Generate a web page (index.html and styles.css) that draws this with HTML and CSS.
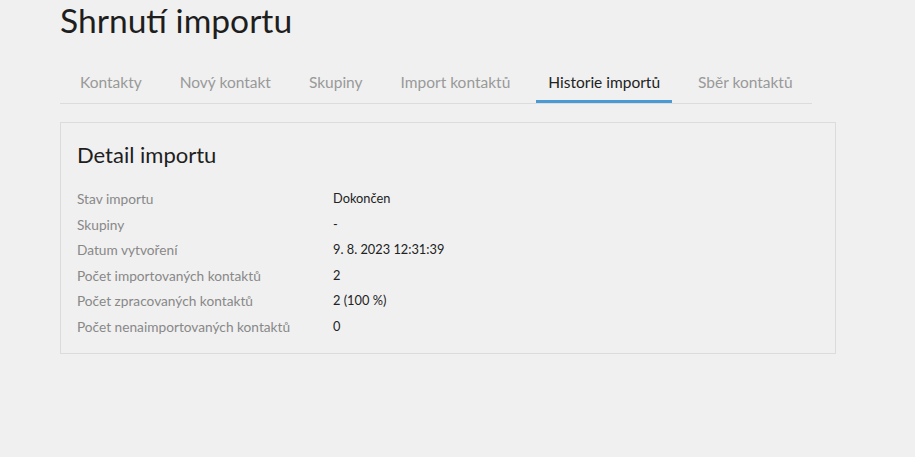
FILE: index.html
```html
<!DOCTYPE html>
<html lang="cs">
<head>
  <meta charset="UTF-8">
  <meta name="viewport" content="width=device-width, initial-scale=1.0">
  <title>Shrnutí importu</title>
  <link rel="stylesheet" href="styles.css">
</head>
<body>
  <div class="page">
    <h1 class="page-title">Shrnutí importu</h1>

    <!-- Tabs -->
    <ul class="tabs">
      <li class="tab">Kontakty</li>
      <li class="tab">Nový kontakt</li>
      <li class="tab">Skupiny</li>
      <li class="tab">Import kontaktů</li>
      <li class="tab active">Historie importů</li>
      <li class="tab">Sběr kontaktů</li>
    </ul>

    <!-- Detail -->
    <div class="card">
      <h2 class="card-title">Detail importu</h2>
      <dl class="details">
        <dt>Stav importu</dt>
        <dd>Dokončen</dd>
        <dt>Skupiny</dt>
        <dd>-</dd>
        <dt>Datum vytvoření</dt>
        <dd>9. 8. 2023 12:31:39</dd>
        <dt>Počet importovaných kontaktů</dt>
        <dd>2</dd>
        <dt>Počet zpracovaných kontaktů</dt>
        <dd>2 (100 %)</dd>
        <dt>Počet nenaimportovaných kontaktů</dt>
        <dd>0</dd>
      </dl>
    </div>
  </div>
</body>
</html>
```

FILE: styles.css
```css
body {
  font-family: Lato, "Open Sans", sans-serif;
  margin: 0;
  padding: 0;
  background-color: #f0f0f0;
  color: #222;
}

.page {
  width: 776px;
  margin-left: 60px;
}

.page-title {
  margin: 0;
  padding-top: 1px;
  font-size: 33.6px;
  font-weight: 400;
  line-height: 38px;
  color: #1e1e1e;
}

.tabs {
  display: inline-flex;
  list-style: none;
  margin: 33px 0 0;
  padding: 0;
  border-bottom: 1px solid #dcdcdc;
}

.tab {
  margin: 0 7px;
  padding: 0 12px 8px;
  font-size: 15.5px;
  line-height: 20px;
  color: #999;
  border-bottom: 3px solid transparent;
}

.tab:first-child {
  margin-left: 8px;
}

.tab.active {
  color: #222;
  border-bottom-color: #4a9ad4;
}

.card {
  margin-top: 18px;
  border: 1px solid #dcdcdc;
  padding: 18px 16px 13px;
}

.card-title {
  margin: 0 0 17px;
  font-size: 22px;
  font-weight: 400;
  line-height: 28px;
  color: #1e1e1e;
}

.details {
  display: grid;
  grid-template-columns: 256px 1fr;
  margin: 0;
  line-height: 25.6px;
}

.details dt {
  font-size: 13.7px;
  color: #888;
}

.details dd {
  margin: 0;
  font-size: 12.8px;
  color: #222;
}
```
